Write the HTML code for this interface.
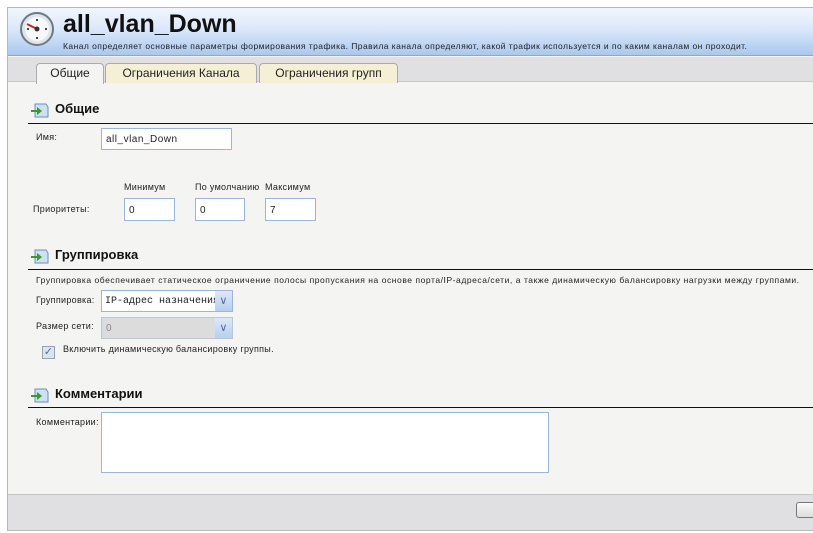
<!DOCTYPE html>
<html><head><meta charset="utf-8"><style>
*{box-sizing:border-box;margin:0;padding:0}
body{width:813px;height:533px;background:#fff;position:relative;overflow:hidden;font-family:"Liberation Sans",sans-serif;font-size:9px;color:#222;letter-spacing:0.3px}
.abs{position:absolute;white-space:nowrap}
#frame{position:absolute;left:7px;top:7px;width:806px;height:524px;border:1px solid #b8b8b8;border-right:none;background:#f4f4f2}
#hdr{position:absolute;left:8px;top:8px;width:805px;height:48px;background:linear-gradient(#f2f6fd,#dbe8fa 45%,#aac8ee);border-bottom:1px solid #9aa6b8}
#tabs{position:absolute;left:8px;top:57px;width:805px;height:25px;background:#e0e0e2;border-bottom:1px solid #c8c8c8}
.tab{position:absolute;top:63px;height:20px;font-size:12px;letter-spacing:0;color:#222;text-align:center;line-height:18px;background:#f5efd6;border:1px solid #aaa;border-bottom:none;border-radius:4px 4px 0 0}
.sec{position:absolute;left:28px;width:785px;height:1px;background:#111}
.sh{position:absolute;font-weight:bold;font-size:13px;letter-spacing:0;color:#111}
.inp{position:absolute;background:#fff;border:1px solid #9bb6d8;font-size:10px;padding:3px 0 0 4px;overflow:hidden;white-space:nowrap}
#foot{position:absolute;left:8px;top:494px;width:805px;height:36px;background:#e0e0e2;border-top:1px solid #c4c4c4}
</style></head><body>
<div id="frame"></div>
<div id="hdr"></div>
<svg class="abs" style="left:19px;top:11px" width="36" height="36" viewBox="0 0 36 36">
<circle cx="18" cy="18" r="16" fill="#dfe5ea" stroke="#6d7a86" stroke-width="2"/>
<circle cx="18" cy="18" r="12" fill="#f6f8fa"/>
<g stroke="#3d4a58" stroke-width="2"><line x1="18" y1="8" x2="18" y2="10"/><line x1="28" y1="18" x2="26" y2="18"/><line x1="18" y1="28" x2="18" y2="26"/><line x1="8" y1="18" x2="10" y2="18"/></g>
<line x1="18" y1="18" x2="8" y2="13" stroke="#c22" stroke-width="2"/><circle cx="18" cy="18" r="2.5" fill="#333"/></svg>
<div class="abs" style="left:63px;top:10px;font-weight:bold;font-size:25px;letter-spacing:0;color:#111">all_vlan_Down</div>
<div class="abs" style="left:63px;top:41px;font-size:8.5px;color:#222;letter-spacing:0.45px">Канал определяет основные параметры формирования трафика. Правила канала определяют, какой трафик используется и по каким каналам он проходит.</div>
<div id="tabs"></div>
<div class="tab" style="left:36px;width:68px;background:#f4f4f2;height:21px">Общие</div>
<div class="tab" style="left:105px;width:152px">Ограничения Канала</div>
<div class="tab" style="left:259px;width:139px">Ограничения групп</div>

<svg class="abs" style="left:30px;top:101px" width="20" height="18" viewBox="0 0 20 18"><path d="M5 3h11l2 3v10H5z" fill="#cfe0f4" stroke="#6a8fb8"/><path d="M1 9h6V6l5 4-5 4v-3H1z" fill="#3a9a2a"/></svg>
<div class="sh" style="left:55px;top:101px">Общие</div>
<div class="sec" style="top:123px"></div>
<div class="abs" style="left:36px;top:132px">Имя:</div>
<div class="inp" style="left:101px;top:128px;width:131px;height:22px;padding-top:5px;letter-spacing:0.5px">all_vlan_Down</div>
<div class="abs" style="left:124px;top:182px">Минимум</div>
<div class="abs" style="left:195px;top:182px">По умолчанию</div>
<div class="abs" style="left:265px;top:182px">Максимум</div>
<div class="abs" style="left:33px;top:204px">Приоритеты:</div>
<div class="inp" style="left:124px;top:198px;width:51px;height:23px;padding-top:6px">0</div>
<div class="inp" style="left:195px;top:198px;width:50px;height:23px;padding-top:6px">0</div>
<div class="inp" style="left:265px;top:198px;width:51px;height:23px;padding-top:6px">7</div>

<svg class="abs" style="left:30px;top:247px" width="20" height="18" viewBox="0 0 20 18"><path d="M5 3h11l2 3v10H5z" fill="#cfe0f4" stroke="#6a8fb8"/><path d="M1 9h6V6l5 4-5 4v-3H1z" fill="#3a9a2a"/></svg>
<div class="sh" style="left:55px;top:247px">Группировка</div>
<div class="sec" style="top:269px"></div>
<div class="abs" style="left:36px;top:275px;font-size:8.5px;letter-spacing:0.55px">Группировка обеспечивает статическое ограничение полосы пропускания на основе порта/IP-адреса/сети, а также динамическую балансировку нагрузки между группами.</div>
<div class="abs" style="left:36px;top:295px">Группировка:</div>
<div class="inp" style="left:101px;top:290px;width:132px;height:22px;font-family:'Liberation Mono',monospace;font-size:10px;padding-top:5px;padding-left:3px;letter-spacing:0">IP-адрес назначения</div>
<div class="abs" style="left:215px;top:291px;width:17px;height:20px;background:linear-gradient(#dce8f8,#b8cfee);color:#4a6fa8;font-size:11px;text-align:center;line-height:20px">&#x2228;</div>
<div class="abs" style="left:36px;top:321px">Размер сети:</div>
<div class="inp" style="left:101px;top:317px;width:132px;height:22px;background:#dcdcdc;border-color:#b8c6d8;color:#888;padding-top:5px">0</div>
<div class="abs" style="left:215px;top:318px;width:17px;height:20px;background:linear-gradient(#dce8f8,#b8cfee);color:#4a6fa8;font-size:11px;text-align:center;line-height:20px">&#x2228;</div>
<div class="abs" style="left:42px;top:346px;width:13px;height:13px;border:1px solid #8ea4c0;background:#dde4ee;color:#4a6fa8;font-size:11px;line-height:11px;text-align:center">&#x2713;</div>
<div class="abs" style="left:63px;top:344px">Включить динамическую балансировку группы.</div>

<svg class="abs" style="left:30px;top:386px" width="20" height="18" viewBox="0 0 20 18"><path d="M5 3h11l2 3v10H5z" fill="#cfe0f4" stroke="#6a8fb8"/><path d="M1 9h6V6l5 4-5 4v-3H1z" fill="#3a9a2a"/></svg>
<div class="sh" style="left:55px;top:386px">Комментарии</div>
<div class="sec" style="top:407px"></div>
<div class="abs" style="left:36px;top:417px">Комментарии:</div>
<div class="inp" style="left:101px;top:412px;width:448px;height:61px"></div>
<div id="foot"></div>
<div class="abs" style="left:796px;top:502px;width:17px;height:16px;border:1px solid #777;border-right:none;border-radius:3px 0 0 3px;background:linear-gradient(#fafafa,#ddd)"></div>
</body></html>
